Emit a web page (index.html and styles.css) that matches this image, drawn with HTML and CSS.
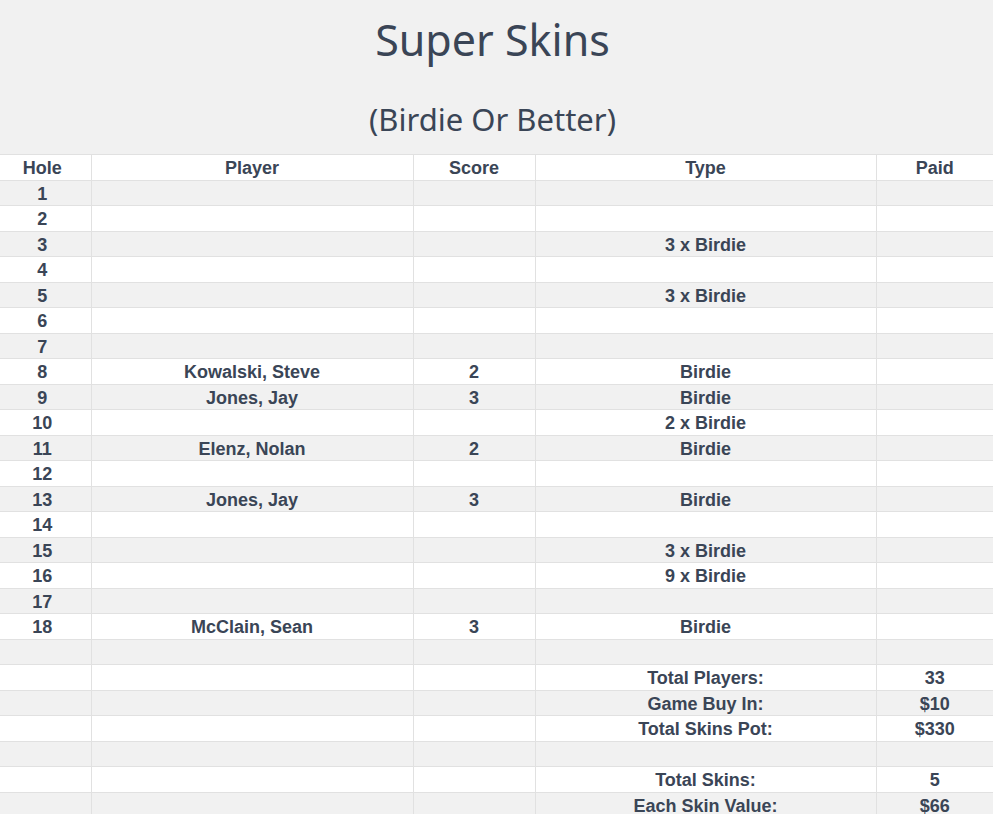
FILE: index.html
```html
<!DOCTYPE html>
<html lang="en">
<head>
<meta charset="utf-8">
<title>Super Skins</title>
<link rel="stylesheet" href="styles.css">
</head>
<body>
<header class="page-head">
  <h1 class="title">Super Skins</h1>
  <h2 class="subtitle">(Birdie Or Better)</h2>
</header>
<table class="skins">
  <colgroup>
    <col class="c-hole">
    <col class="c-player">
    <col class="c-score">
    <col class="c-type">
    <col class="c-paid">
  </colgroup>
  <thead>
    <tr><th>Hole</th><th>Player</th><th>Score</th><th>Type</th><th>Paid</th></tr>
  </thead>
  <tbody>
    <tr><td>1</td><td></td><td></td><td></td><td></td></tr>
    <tr><td>2</td><td></td><td></td><td></td><td></td></tr>
    <tr><td>3</td><td></td><td></td><td>3 x Birdie</td><td></td></tr>
    <tr><td>4</td><td></td><td></td><td></td><td></td></tr>
    <tr><td>5</td><td></td><td></td><td>3 x Birdie</td><td></td></tr>
    <tr><td>6</td><td></td><td></td><td></td><td></td></tr>
    <tr><td>7</td><td></td><td></td><td></td><td></td></tr>
    <tr><td>8</td><td>Kowalski, Steve</td><td>2</td><td>Birdie</td><td></td></tr>
    <tr><td>9</td><td>Jones, Jay</td><td>3</td><td>Birdie</td><td></td></tr>
    <tr><td>10</td><td></td><td></td><td>2 x Birdie</td><td></td></tr>
    <tr><td>11</td><td>Elenz, Nolan</td><td>2</td><td>Birdie</td><td></td></tr>
    <tr><td>12</td><td></td><td></td><td></td><td></td></tr>
    <tr><td>13</td><td>Jones, Jay</td><td>3</td><td>Birdie</td><td></td></tr>
    <tr><td>14</td><td></td><td></td><td></td><td></td></tr>
    <tr><td>15</td><td></td><td></td><td>3 x Birdie</td><td></td></tr>
    <tr><td>16</td><td></td><td></td><td>9 x Birdie</td><td></td></tr>
    <tr><td>17</td><td></td><td></td><td></td><td></td></tr>
    <tr><td>18</td><td>McClain, Sean</td><td>3</td><td>Birdie</td><td></td></tr>
    <tr><td></td><td></td><td></td><td></td><td></td></tr>
    <tr><td></td><td></td><td></td><td>Total Players:</td><td>33</td></tr>
    <tr><td></td><td></td><td></td><td>Game Buy In:</td><td>$10</td></tr>
    <tr><td></td><td></td><td></td><td>Total Skins Pot:</td><td>$330</td></tr>
    <tr><td></td><td></td><td></td><td></td><td></td></tr>
    <tr><td></td><td></td><td></td><td>Total Skins:</td><td>5</td></tr>
    <tr><td></td><td></td><td></td><td>Each Skin Value:</td><td>$66</td></tr>
  </tbody>
</table>
</body>
</html>
```
FILE: styles.css
```css
html, body {
  margin: 0;
  padding: 0;
  background: #f1f1f1;
}

body {
  color: #3a4556;
  font-family: "Liberation Sans", Arial, sans-serif;
}

.page-head {
  text-align: center;
  padding: 14px 8px 0 0;
}

.title {
  margin: 0;
  font-family: "Noto Sans", "Open Sans", sans-serif;
  font-weight: 400;
  font-size: 43px;
  line-height: 52px;
}

.subtitle {
  margin: 33px 0 0;
  font-family: "Noto Sans", "Open Sans", sans-serif;
  font-weight: 400;
  font-size: 31px;
  line-height: 40px;
}

.skins {
  width: 100%;
  margin-top: 15px;
  border-collapse: collapse;
  table-layout: fixed;
  font-size: 18px;
  font-weight: 700;
}

.c-hole { width: 91px; }
.c-player { width: 322px; }
.c-score { width: 122px; }
.c-type { width: 341px; }
.c-paid { width: 117px; }

.skins th,
.skins td {
  border: 1px solid #e1e1e1;
  padding: 2px 0 0;
  height: 22.5px;
  line-height: 22.5px;
  text-align: center;
  white-space: nowrap;
}

.skins th:first-child,
.skins td:first-child {
  border-left: none;
  padding-right: 6px;
}

.skins th:last-child,
.skins td:last-child {
  border-right: none;
}

.skins thead tr {
  background: #ffffff;
}

.skins tbody tr:nth-child(odd) {
  background: #f1f1f1;
}

.skins tbody tr:nth-child(even) {
  background: #ffffff;
}
```
